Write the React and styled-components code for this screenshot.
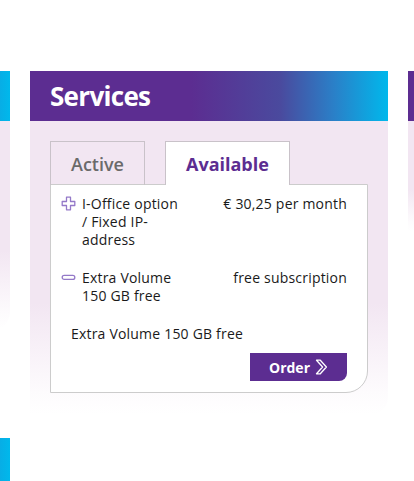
import styled, { createGlobalStyle } from "styled-components";

const GlobalStyle = createGlobalStyle`
  body {
    margin: 0;
    background: #ffffff;
    font-family: "Open Sans", "Liberation Sans", sans-serif;
    color: #1a1a1a;
  }
`;

const services = [
  {
    icon: "plus",
    name: "I-Office option / Fixed IP-address",
    price: "€ 30,25 per month",
  },
  {
    icon: "minus",
    name: "Extra Volume 150 GB free",
    price: "free subscription",
  },
];

const PlusIcon = () => (
  <svg width="15" height="15" viewBox="0 0 15 15">
    <path
      d="M5.5 1.2 H9.5 V5.5 H13.8 V9.5 H9.5 V13.8 H5.5 V9.5 H1.2 V5.5 H5.5 Z"
      fill="none"
      stroke="#9479c8"
      strokeWidth="1.3"
      strokeLinejoin="round"
    />
  </svg>
);

const MinusIcon = () => (
  <svg width="15" height="15" viewBox="0 0 15 15">
    <rect
      x="1.2"
      y="5.4"
      width="12.6"
      height="4"
      rx="2"
      fill="none"
      stroke="#9479c8"
      strokeWidth="1.3"
    />
  </svg>
);

const Chevron = () => (
  <svg width="13" height="16" viewBox="0 0 13 16">
    <path
      d="M1.5 1.2 H5.3 L11.4 8 L5.3 14.8 H1.5 L7.6 8 Z"
      fill="none"
      stroke="#ffffff"
      strokeWidth="1.3"
      strokeLinejoin="round"
    />
  </svg>
);

export default function App() {
  return (
    <>
      <GlobalStyle />
      <Viewport>
        <Track>
          <Column $gap={108}>
            <Card>
              <CardHeader />
              <CardBody $height={209} />
            </Card>
            <Card>
              <CardHeader />
            </Card>
          </Column>

          <Column>
            <Card>
              <CardHeader>Services</CardHeader>
              <CardBody>
                <TabRow>
                  <Tab>Active</Tab>
                  <Tab $selected>Available</Tab>
                </TabRow>
                <Panel>
                  {services.map((s) => (
                    <ServiceRow key={s.name}>
                      <IconCell>
                        {s.icon === "plus" ? <PlusIcon /> : <MinusIcon />}
                      </IconCell>
                      <ServiceName>{s.name}</ServiceName>
                      <ServicePrice>{s.price}</ServicePrice>
                    </ServiceRow>
                  ))}
                  <Summary>Extra Volume 150 GB free</Summary>
                  <Actions>
                    <OrderButton>
                      Order <Chevron />
                    </OrderButton>
                  </Actions>
                </Panel>
              </CardBody>
            </Card>
          </Column>

          <Column>
            <Card>
              <CardHeader />
              <CardBody $height={110} />
            </Card>
          </Column>
        </Track>
      </Viewport>
    </>
  );
}

// styled-components
const Viewport = styled.div`
  height: 481px;
  overflow: hidden;
  padding-top: 71px;
  box-sizing: border-box;
`;

const Track = styled.div`
  display: flex;
  align-items: flex-start;
  gap: 20px;
  margin-left: -348px;
`;

const Column = styled.div`
  display: flex;
  flex-direction: column;
  gap: ${(p) => p.$gap || 0}px;
  flex-shrink: 0;
  width: 358px;
`;

const Card = styled.section`
  width: 358px;
`;

const CardHeader = styled.h2`
  margin: 0;
  height: 50px;
  box-sizing: border-box;
  padding: 0 0 0 20px;
  display: flex;
  align-items: center;
  background: linear-gradient(
    to right,
    #5c2d91 0%,
    #5c2d91 45%,
    #4a4a9e 70%,
    #2a80c8 85%,
    #00b8ec 100%
  );
  color: #ffffff;
  font-size: 26px;
  font-weight: 700;
  letter-spacing: -0.7px;
`;

const CardBody = styled.div`
  ${(p) => (p.$height ? `height: ${p.$height}px;` : "")}
  padding: 20px 20px 22px;
  box-sizing: border-box;
  background: linear-gradient(
    to bottom,
    #f2e6f2 0%,
    #f2e6f2 62%,
    #fdfbfd 92%,
    #ffffff 100%
  );
  border-bottom-right-radius: 18px;
`;

const TabRow = styled.div`
  display: flex;
  gap: 20px;
`;

const Tab = styled.div`
  height: 44px;
  box-sizing: border-box;
  padding: 0 20px;
  display: flex;
  align-items: center;
  border: 1px solid #c9c2c9;
  border-bottom: none;
  margin-bottom: -1px;
  position: relative;
  z-index: 1;
  background: ${(p) => (p.$selected ? "#ffffff" : "transparent")};
  color: ${(p) => (p.$selected ? "#5c2d91" : "#6a6a6a")};
  font-size: 18px;
  font-weight: ${(p) => (p.$selected ? 700 : 600)};
`;

const Panel = styled.div`
  background: #ffffff;
  border: 1px solid #cccccc;
  border-bottom-right-radius: 22px;
  padding: 10px 20px 11px 10px;
  display: flex;
  flex-direction: column;
  gap: 20px;
  letter-spacing: 0.2px;
`;

const ServiceRow = styled.div`
  display: grid;
  grid-template-columns: 21px 100px 1fr;
  font-size: 14px;
  line-height: 18px;
`;

const IconCell = styled.div`
  display: flex;
  align-items: flex-start;
  padding-top: 1px;
`;

const ServiceName = styled.div``;

const ServicePrice = styled.div`
  text-align: right;
`;

const Summary = styled.div`
  font-size: 14px;
  line-height: 18px;
  padding-left: 10px;
`;

const Actions = styled.div`
  display: flex;
  justify-content: flex-end;
  margin-top: -10px;
`;

const OrderButton = styled.button`
  width: 97px;
  height: 28px;
  border: none;
  border-bottom-right-radius: 8px;
  background: #5c2d91;
  color: #ffffff;
  font-family: inherit;
  font-size: 14px;
  font-weight: 700;
  display: flex;
  align-items: center;
  justify-content: center;
  gap: 5px;
  padding: 0;
`;
